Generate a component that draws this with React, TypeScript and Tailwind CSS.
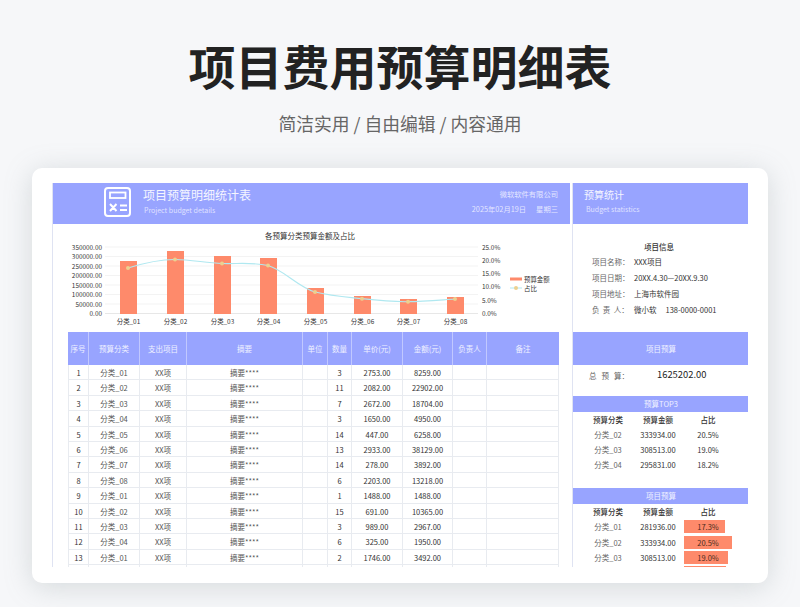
const cols = 'grid grid-cols-[21px_51px_47px_116px_25px_24px_51px_50px_34px_72px]';

const headers = ['序号', '预算分类', '支出项目', '摘要', '单位', '数量', '单价(元)', '金额(元)', '负责人', '备注'];

const rows = [
    [1, '分类_01', 3, '2753.00', '8259.00'],
    [2, '分类_02', 11, '2082.00', '22902.00'],
    [3, '分类_03', 7, '2672.00', '18704.00'],
    [4, '分类_04', 3, '1650.00', '4950.00'],
    [5, '分类_05', 14, '447.00', '6258.00'],
    [6, '分类_06', 13, '2933.00', '38129.00'],
    [7, '分类_07', 14, '278.00', '3892.00'],
    [8, '分类_08', 6, '2203.00', '13218.00'],
    [9, '分类_01', 1, '1488.00', '1488.00'],
    [10, '分类_02', 15, '691.00', '10365.00'],
    [11, '分类_03', 3, '989.00', '2967.00'],
    [12, '分类_04', 6, '325.00', '1950.00'],
    [13, '分类_01', 2, '1746.00', '3492.00'],
];

const bars = [
    { x: 120, top: 261, label: '分类_01' },
    { x: 167, top: 251, label: '分类_02' },
    { x: 214, top: 256, label: '分类_03' },
    { x: 260, top: 258, label: '分类_04' },
    { x: 307, top: 288, label: '分类_05' },
    { x: 354, top: 296, label: '分类_06' },
    { x: 400, top: 299, label: '分类_07' },
    { x: 447, top: 297, label: '分类_08' },
];

const dots = [
    [128, 268],
    [175, 259.5],
    [222, 263.5],
    [268, 265.5],
    [315, 292],
    [362, 298.7],
    [408, 301.7],
    [455, 299],
];

const leftAxis = ['350000.00', '300000.00', '250000.00', '200000.00', '150000.00', '100000.00', '50000.00', '0.00'];
const rightAxis = ['25.0%', '20.0%', '15.0%', '10.0%', '5.0%', '0.0%'];

const Chart = () => (
    <svg width="516" height="108" viewBox="52 224 516 108" className="-ml-[1px] block" fontFamily="'Noto Sans CJK SC', sans-serif">
        <text x="310" y="239" textAnchor="middle" fontSize="7.5" fill="#333">各预算分类预算金额及占比</text>
        {leftAxis.map((t, i) => (
            <g key={t}>
                <line x1="105" x2="478" y1={247 + i * 9.5} y2={247 + i * 9.5} stroke={i === 7 ? '#dddddd' : '#eeeeee'} strokeWidth="0.7" />
                <text x="102" y={249.5 + i * 9.5} textAnchor="end" fontSize="6.4" fill="#333">{t}</text>
            </g>
        ))}
        {rightAxis.map((t, i) => (
            <text key={t} x="482" y={249.5 + i * 13.3} fontSize="6.4" fill="#333">{t}</text>
        ))}
        {bars.map((b) => (
            <g key={b.label}>
                <rect x={b.x} y={b.top} width="17" height={314 - b.top} fill="#fe8a6b" />
                <text x={b.x + 8.5} y="323.5" textAnchor="middle" fontSize="6.4" fill="#333">{b.label}</text>
            </g>
        ))}
        <path
            d="M128 268C144 263 159 259.5 175 259.5C191 259.5 206 263 222 263.5C238 264 252 262 268 265.5C284 270 298 287 315 292C331 296 346 297 362 298.7C378 300.5 392 302 408 301.7C424 301.5 440 300 455 299"
            fill="none"
            stroke="#b0e8f0"
            strokeWidth="1.2"
        />
        {dots.map(([x, y]) => (
            <circle key={x} cx={x} cy={y} r="2" fill="#ecd08f" />
        ))}
        <rect x="510" y="277.5" width="12" height="3" fill="#fe8a6b" />
        <text x="524" y="281.5" fontSize="6.4" fill="#333">预算金额</text>
        <line x1="510" x2="522" y1="288" y2="288" stroke="#b0e8f0" />
        <circle cx="516" cy="288" r="2" fill="#ecd08f" />
        <text x="524" y="290.5" fontSize="6.4" fill="#333">占比</text>
    </svg>
);

const InfoRow = ({ label, value, extra }: { label: string; value: string; extra?: string }) => (
    <div className="flex h-4 items-center text-[7.5px]">
        <span className="w-[43px] whitespace-pre pl-[1px] text-[#666]">{label}</span>
        <span className="whitespace-pre text-[#333]">{value}</span>
        {extra && <span className="ml-[9px] text-[#333]">{extra}</span>}
    </div>
);

const StatRow = ({ name, amount, pct, bar, tight }: { name: string; amount: string; pct: string; bar?: number; tight?: boolean }) => (
    <div className={`grid ${tight ? 'h-[15px]' : 'h-[15.5px]'} grid-cols-[50px_50px_50px] items-center text-center text-[7.5px] text-[#333]`}>
        <span className="text-[#666]">{name}</span>
        <span>{amount}</span>
        {bar ? (
            <div className="relative flex h-[13px] items-center justify-center">
                <div className="absolute top-0 left-[1px] h-full bg-[#fe8a6b]" style={{ width: bar }} />
                <span className="relative text-[#4a2a20]">{pct}</span>
            </div>
        ) : (
            <span>{pct}</span>
        )}
    </div>
);

const StatHead = () => (
    <div className="grid h-[15px] grid-cols-[50px_50px_50px] items-center text-center text-[7.5px] font-medium text-[#333]">
        <span>预算分类</span>
        <span>预算金额</span>
        <span>占比</span>
    </div>
);

export default function App() {
    return (
        <div className="flex h-[607px] w-[800px] flex-col items-center overflow-hidden bg-[#f6f7f9] font-['Noto_Sans_CJK_SC',sans-serif]">
            <h1 className="mt-[30px] text-[47px] leading-[70px] font-bold text-[#222]">项目费用预算明细表</h1>
            <p className="mt-[9px] text-[17.8px] leading-[28px] text-[#666]">简洁实用 / 自由编辑 / 内容通用</p>

            <div className="mt-[31px] h-[415px] w-[736px] rounded-[10px] bg-white px-[20px] pt-[15px] pb-[16px] shadow-[0_4px_28px_rgba(125,140,145,0.28)]">
                <div className="flex h-[384px] overflow-hidden">
                    <div className="w-[518px] shrink-0 border-l border-[#dfe3f2]">
                        <div className="flex h-[41px] bg-[#98a4ff] text-white">
                            <svg width="27" height="30" viewBox="0 0 27 30" className="mt-[4px] ml-[51px]" fill="none" stroke="#fff">
                                <rect x="1" y="1" width="25" height="28" rx="3" strokeWidth="2" />
                                <rect x="6" y="5.5" width="15.5" height="5.5" strokeWidth="1.8" />
                                <path d="M6 17l6.5 7M12.5 17L6 24M16 18.5h7M16 23h7" strokeWidth="2" />
                            </svg>
                            <div className="ml-[12px] pt-[3px]">
                                <div className="text-[12px] leading-[17px] text-white/90">项目预算明细统计表</div>
                                <div className="mt-[2px] ml-[1px] text-[7px] leading-[10px] text-white/70">Project budget details</div>
                            </div>
                            <div className="mr-[12px] ml-auto pt-[5px] text-right text-[7.3px] text-white/75">
                                <div className="leading-[12px]">微软软件有限公司</div>
                                <div className="mt-[3px] leading-[12px]">
                                    2025年02月19日<span className="ml-[10px]">星期三</span>
                                </div>
                            </div>
                        </div>

                        <Chart />

                        <div className="ml-[15px] w-[491px]">
                            <div className={`${cols} h-[33px] bg-[#98a4ff] text-[7.5px] text-white/85`}>
                                {headers.map((h) => (
                                    <div key={h} className="flex items-center justify-center border-r border-white/40 last:border-r-0">
                                        {h}
                                    </div>
                                ))}
                            </div>
                            {rows.map(([no, cat, qty, price, total]) => (
                                <div key={no} className={`${cols} h-[15.4px] border-b border-[#e8ebf0] text-center text-[7.5px] leading-[15px] text-[#333]`}>
                                    <div className="border-r border-l border-[#e8ebf0]">{no}</div>
                                    <div className="border-r border-[#e8ebf0] text-[#555]">{cat}</div>
                                    <div className="border-r border-[#e8ebf0] text-[#555]">XX项</div>
                                    <div className="border-r border-[#e8ebf0] text-[#555]">摘要****</div>
                                    <div className="border-r border-[#e8ebf0]" />
                                    <div className="border-r border-[#e8ebf0]">{qty}</div>
                                    <div className="border-r border-[#e8ebf0]">{price}</div>
                                    <div className="border-r border-[#e8ebf0]">{total}</div>
                                    <div className="border-r border-[#e8ebf0]" />
                                    <div className="border-r border-[#e8ebf0]" />
                                </div>
                            ))}
                            <div className={`${cols} h-[15.4px]`}>
                                {headers.map((h) => (
                                    <div key={h} className="border-r border-[#e8ebf0] first:border-l" />
                                ))}
                            </div>
                        </div>
                    </div>

                    <div className="ml-[2px] w-[178px] shrink-0 border-x border-[#dfe3f2]">
                        <div className="h-[41px] bg-[#98a4ff] pt-[4px] pl-[11px] text-white">
                            <div className="text-[10px] leading-[15px] text-white/90">预算统计</div>
                            <div className="mt-[2px] ml-[2px] text-[7px] leading-[10px] text-white/70">Budget statistics</div>
                        </div>

                        <div className="h-[108px] pt-[16px]">
                            <div className="pr-[4px] text-center text-[7.5px] leading-[14px] font-medium text-[#333]">项目信息</div>
                            <div className="ml-[18px]">
                                <InfoRow label="项目名称：" value="XXX项目" />
                                <InfoRow label="项目日期：" value="20XX.4.30—20XX.9.30" />
                                <InfoRow label="项目地址：" value="上海市软件园" />
                                <InfoRow label="负  责  人：" value="微小软" extra="138-0000-0001" />
                            </div>
                        </div>

                        <div className="flex h-[33px] items-center justify-center bg-[#98a4ff] text-[7.5px] text-white/85">项目预算</div>
                        <div className="flex h-[31px] items-start pl-[16px]">
                            <span className="mt-[5px] w-[68px] whitespace-pre text-[7.5px] leading-[11px] text-[#666]">总   预   算：</span>
                            <span className="mt-[2px] text-[9.4px] leading-[15px] text-[#222]">1625202.00</span>
                        </div>

                        <div className="flex h-[16px] items-center justify-center bg-[#98a4ff] text-[7.5px] text-white/85">预算TOP3</div>
                        <div className="pl-[10px]">
                            <StatHead />
                            <StatRow tight name="分类_02" amount="333934.00" pct="20.5%" />
                            <StatRow tight name="分类_03" amount="308513.00" pct="19.0%" />
                            <StatRow tight name="分类_04" amount="295831.00" pct="18.2%" />
                        </div>

                        <div className="mt-[16px] flex h-[16px] items-center justify-center bg-[#98a4ff] text-[7.5px] text-white/85">项目预算</div>
                        <div className="pl-[10px]">
                            <StatHead />
                            <StatRow name="分类_01" amount="281936.00" pct="17.3%" bar={41} />
                            <StatRow name="分类_02" amount="333934.00" pct="20.5%" bar={48} />
                            <StatRow name="分类_03" amount="308513.00" pct="19.0%" bar={44} />
                            <div className="grid h-[15.5px] grid-cols-[50px_50px_50px]">
                                <div className="col-start-3 ml-[1px] h-full w-[42px] bg-[#fe8a6b]" />
                            </div>
                        </div>
                    </div>
                </div>
            </div>
        </div>
    );
}
